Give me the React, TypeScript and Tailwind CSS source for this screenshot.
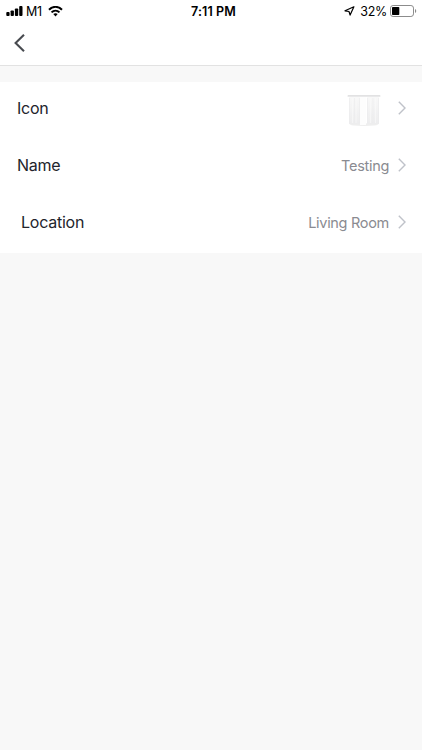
import type { ReactNode } from "react";

function StatusBar() {
  return (
    <div className="grid h-[22px] shrink-0 grid-cols-[1fr_auto_1fr] items-center pr-[5px] pl-[6px] text-black">
      <div className="flex items-center">
        <svg width="17" height="10" viewBox="0 0 17 10" fill="currentColor">
          <rect x="0.3" y="6" width="3.3" height="4" rx="0.9" />
          <rect x="4.6" y="4.4" width="3.3" height="5.6" rx="0.9" />
          <rect x="8.9" y="2.4" width="3.3" height="7.6" rx="0.9" />
          <rect x="13.2" y="0" width="3.3" height="10" rx="0.9" />
        </svg>
        <span className="ml-[3px] w-[17px] pt-[2px] text-[12.5px] tracking-[-0.2px] whitespace-nowrap">M1</span>
        <svg className="ml-[5px]" width="15" height="11" viewBox="0 0 15 11" fill="none" stroke="currentColor" strokeWidth="2">
          <path d="M1 3.7C4.7 -0.1 10.3 -0.1 14 3.7" />
          <path d="M3.5 6.4C5.8 4.2 9.2 4.2 11.5 6.4" />
          <path d="M7.5 10.4L5.3 8.1C6.6 7 8.4 7 9.7 8.1Z" fill="currentColor" stroke="none" />
        </svg>
      </div>
      <span className="pt-[2px] pl-[4px] text-[12.5px] font-semibold tracking-[0.1px]">7:11 PM</span>
      <div className="flex items-center justify-end">
        <svg width="11" height="10" viewBox="0 0 11 10" fill="none" stroke="currentColor" strokeWidth="1.2" strokeLinejoin="round">
          <path d="M9.9 0.8L1 4.8L5 5.5L6.1 9.1Z" />
        </svg>
        <span className="ml-[5px] pt-[2px] text-[12.5px] tracking-[-0.3px]">32%</span>
        <svg className="ml-[3px]" width="27" height="12" viewBox="0 0 27 12">
          <rect x="0.5" y="0.5" width="23" height="11" rx="2.6" fill="none" stroke="#8c8c8c" />
          <rect x="2" y="2" width="7.3" height="8" rx="0.8" fill="black" />
          <path d="M25 4V8C26.7 7.3 26.7 4.7 25 4Z" fill="#8c8c8c" />
        </svg>
      </div>
    </div>
  );
}

function CurtainIcon() {
  return (
    <svg width="34" height="34" viewBox="0 0 34 34">
      <defs>
        <linearGradient id="fabric" x1="0" y1="0" x2="0" y2="1">
          <stop offset="0" stopColor="#f8f8f8" />
          <stop offset="1" stopColor="#ededee" />
        </linearGradient>
      </defs>
      <ellipse cx="17" cy="30.6" rx="14.5" ry="1.3" fill="#eeeeee" />
      <path d="M2 3H13V30H2Z M20 3H32V30H20Z" fill="url(#fabric)" />
      <path d="M13 3H19V31H13Z" fill="#fdfdfd" />
      <path d="M5.5 4V29M9 4V29M23.5 4V29M28.5 4V29" stroke="#fafafa" strokeWidth="0.6" />
      <path d="M2.5 4V29M7.5 4V29M12.5 4V29M20.5 4V29M26 4V29M31.5 4V29" stroke="#ebebec" strokeWidth="0.6" />
      <rect x="0.5" y="1" width="33" height="1.8" rx="0.9" fill="#e2e2e3" />
    </svg>
  );
}

interface RowProps {
  label: string;
  indent?: boolean;
  children: ReactNode;
}

function SettingsRow({ label, indent, children }: RowProps) {
  return (
    <button className={`flex h-[57px] w-full items-center justify-between pr-4 text-left ${indent ? "pl-[21px]" : "pl-[17px]"}`}>
      <span className="text-[16px] tracking-[-0.25px] text-[#22242c]">{label}</span>
      <span className="flex items-center text-[14.5px] tracking-[-0.3px] text-[#8a8b91]">
        <span className="pt-[2px]">{children}</span>
        <svg className="ml-[9px]" width="8" height="14" viewBox="0 0 8 14" fill="none" stroke="#bfc2c9" strokeWidth="1.4">
          <path d="M0.8 0.8L7 7L0.8 13.2" />
        </svg>
      </span>
    </button>
  );
}

export default function App() {
  return (
    <div className="flex h-screen flex-col bg-[#f8f8f8] font-['Inter','Liberation_Sans',sans-serif]">
      <header className="flex h-[66px] shrink-0 flex-col border-b border-[#e2e2e2] bg-white">
        <StatusBar />
        <button className="flex h-[42px] w-12 items-center pl-[14px]" aria-label="Back">
          <svg width="11" height="18" viewBox="0 0 11 18" fill="none" stroke="#484b50" strokeWidth="2.1">
            <path d="M10 0.8L1.6 9L10 17.2" />
          </svg>
        </button>
      </header>

      <main className="mt-4 h-[171px] bg-white">
        <div className="-mt-[3px]">
          <SettingsRow label="Icon">
            <span className="mr-[8px] flex pt-1">
              <CurtainIcon />
            </span>
          </SettingsRow>
          <SettingsRow label="Name">Testing</SettingsRow>
          <SettingsRow label="Location" indent>
            Living Room
          </SettingsRow>
        </div>
      </main>
    </div>
  );
}
